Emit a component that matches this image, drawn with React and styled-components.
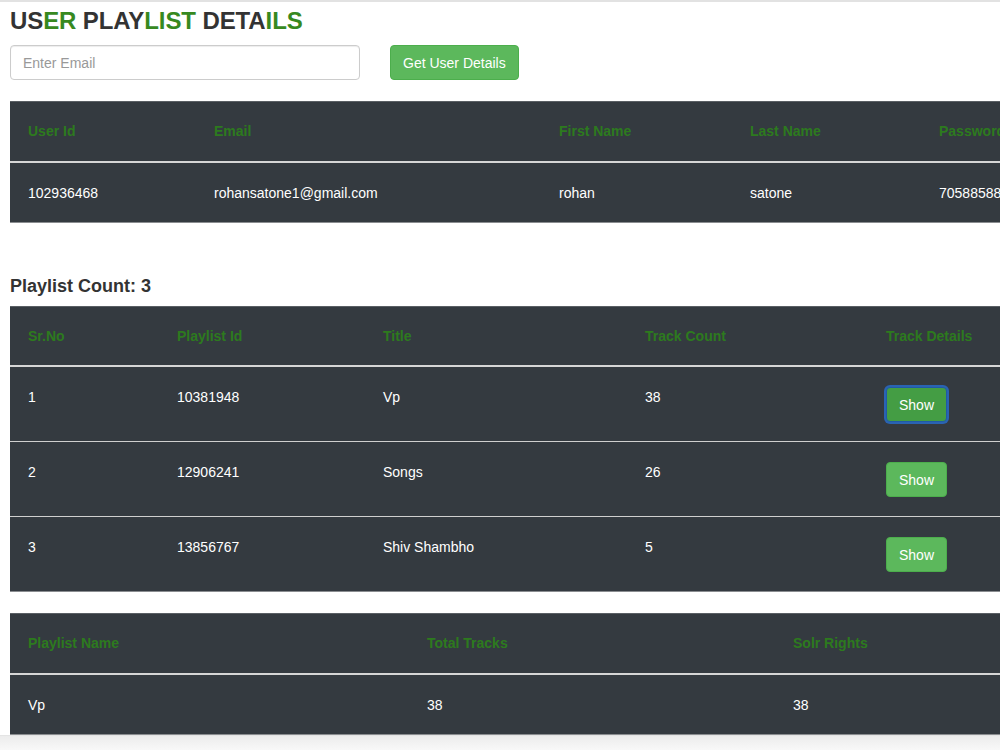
import React from "react";
import styled, { createGlobalStyle } from "styled-components";

const Global = createGlobalStyle`
  html, body { margin: 0; padding: 0; overflow: hidden; background: #fff; }
  body { font-family: "Liberation Sans", Arial, Helvetica, sans-serif; font-size: 14px; color: #333; }
  * { box-sizing: border-box; }
`;

const Page = styled.div`
  border-top: 2px solid #e2e2e2;
  padding: 0 0 40px 10px;
  width: 1200px;
`;

const Title = styled.h2`
  margin: 6px 0 11px;
  font-size: 24px;
  line-height: 26px;
  font-weight: 700;
  letter-spacing: -0.1px;
  color: #333;
`;

const Accent = styled.span`
  color: #37891f;
`;

const FormRow = styled.div`
  display: flex;
  gap: 30px;
  align-items: center;
  margin-bottom: 21px;
`;

const Input = styled.input`
  width: 350px;
  height: 35px;
  padding: 6px 12px;
  font-family: inherit;
  font-size: 14px;
  color: #555;
  border: 1px solid #ccc;
  border-radius: 4px;
  box-shadow: inset 0 1px 1px rgba(0, 0, 0, 0.075);
  outline: none;
  &::placeholder { color: #999; }
`;

const Button = styled.button`
  height: 35px;
  padding: 6px 12px;
  font-family: inherit;
  font-size: 14px;
  line-height: 20px;
  color: #fff;
  background: ${(p) => (p.$focused ? "#449d44" : "#5cb85c")};
  border: 1px solid ${(p) => (p.$focused ? "#1f5aa6" : "#4cae4c")};
  border-radius: 4px;
  box-shadow: ${(p) => (p.$focused ? "0 0 0 2px #2a63b3" : "none")};
  cursor: pointer;
`;

const Table = styled.table`
  width: 1100px;
  border-collapse: collapse;
  background: #343a40;
  border-top: 1px solid #5a5f64;
  border-bottom: 1px solid #8a8d90;
  margin-bottom: ${(p) => p.$mb || 0}px;
`;

const Th = styled.th`
  text-align: left;
  vertical-align: top;
  font-weight: 700;
  font-size: 14px;
  line-height: 20px;
  color: #2d7a1e;
  padding: 19px 18px ${(p) => p.$pb ?? 20}px;
  border-bottom: 2px solid #d6d6d6;
  width: ${(p) => (p.$w ? `${p.$w}px` : "auto")};
`;

const Td = styled.td`
  text-align: left;
  vertical-align: top;
  font-size: 14px;
  line-height: 20px;
  color: #fff;
  padding: 20px 18px 19px;
  border-top: 1px solid #cfcfcf;
  tr:first-child > & { border-top: none; }
`;

const CountHeading = styled.h4`
  margin: 0 0 10px;
  font-size: 18px;
  line-height: 20px;
  font-weight: 700;
  color: #333;
`;

const Spacer = styled.div`
  height: ${(p) => p.$h}px;
`;

const ScrollStrip = styled.div`
  position: fixed;
  left: 0;
  right: 0;
  bottom: 0;
  height: 15px;
  background: linear-gradient(#ececec, #f8f8f8);
  border-top: 1px solid #e4e4e4;
`;

const user = {
  id: "102936468",
  email: "rohansatone1@gmail.com",
  first: "rohan",
  last: "satone",
  password: "7058858899",
};

const playlists = [
  { id: "10381948", title: "Vp", count: 38 },
  { id: "12906241", title: "Songs", count: 26 },
  { id: "13856767", title: "Shiv Shambho", count: 5 },
];

export default function App() {
  return (
    <>
      <Global />
      <Page>
        <Title>
          US<Accent>ER</Accent> PLAY<Accent>LIST</Accent> DETA<Accent>ILS</Accent>
        </Title>
        <FormRow>
          <Input placeholder="Enter Email" />
          <Button>Get User Details</Button>
        </FormRow>

        <Table>
          <thead>
            <tr>
              <Th $w={186}>User Id</Th>
              <Th $w={345}>Email</Th>
              <Th $w={191}>First Name</Th>
              <Th $w={189}>Last Name</Th>
              <Th>Password</Th>
            </tr>
          </thead>
          <tbody>
            <tr>
              <Td>{user.id}</Td>
              <Td>{user.email}</Td>
              <Td>{user.first}</Td>
              <Td>{user.last}</Td>
              <Td>{user.password}</Td>
            </tr>
          </tbody>
        </Table>

        <Spacer $h={53} />
        <CountHeading>Playlist Count: {playlists.length}</CountHeading>

        <Table $mb={21}>
          <thead>
            <tr>
              <Th $w={149} $pb={19}>Sr.No</Th>
              <Th $w={206} $pb={19}>Playlist Id</Th>
              <Th $w={262} $pb={19}>Title</Th>
              <Th $w={241} $pb={19}>Track Count</Th>
              <Th $pb={19}>Track Details</Th>
            </tr>
          </thead>
          <tbody>
            {playlists.map((p, i) => (
              <tr key={p.id}>
                <Td>{i + 1}</Td>
                <Td>{p.id}</Td>
                <Td>{p.title}</Td>
                <Td>{p.count}</Td>
                <Td>
                  <Button $focused={i === 0}>Show</Button>
                </Td>
              </tr>
            ))}
          </tbody>
        </Table>

        <Table>
          <thead>
            <tr>
              <Th $w={399}>Playlist Name</Th>
              <Th $w={366}>Total Tracks</Th>
              <Th>Solr Rights</Th>
            </tr>
          </thead>
          <tbody>
            <tr>
              <Td>Vp</Td>
              <Td>38</Td>
              <Td>38</Td>
            </tr>
          </tbody>
        </Table>
      </Page>
      <ScrollStrip />
    </>
  );
}
